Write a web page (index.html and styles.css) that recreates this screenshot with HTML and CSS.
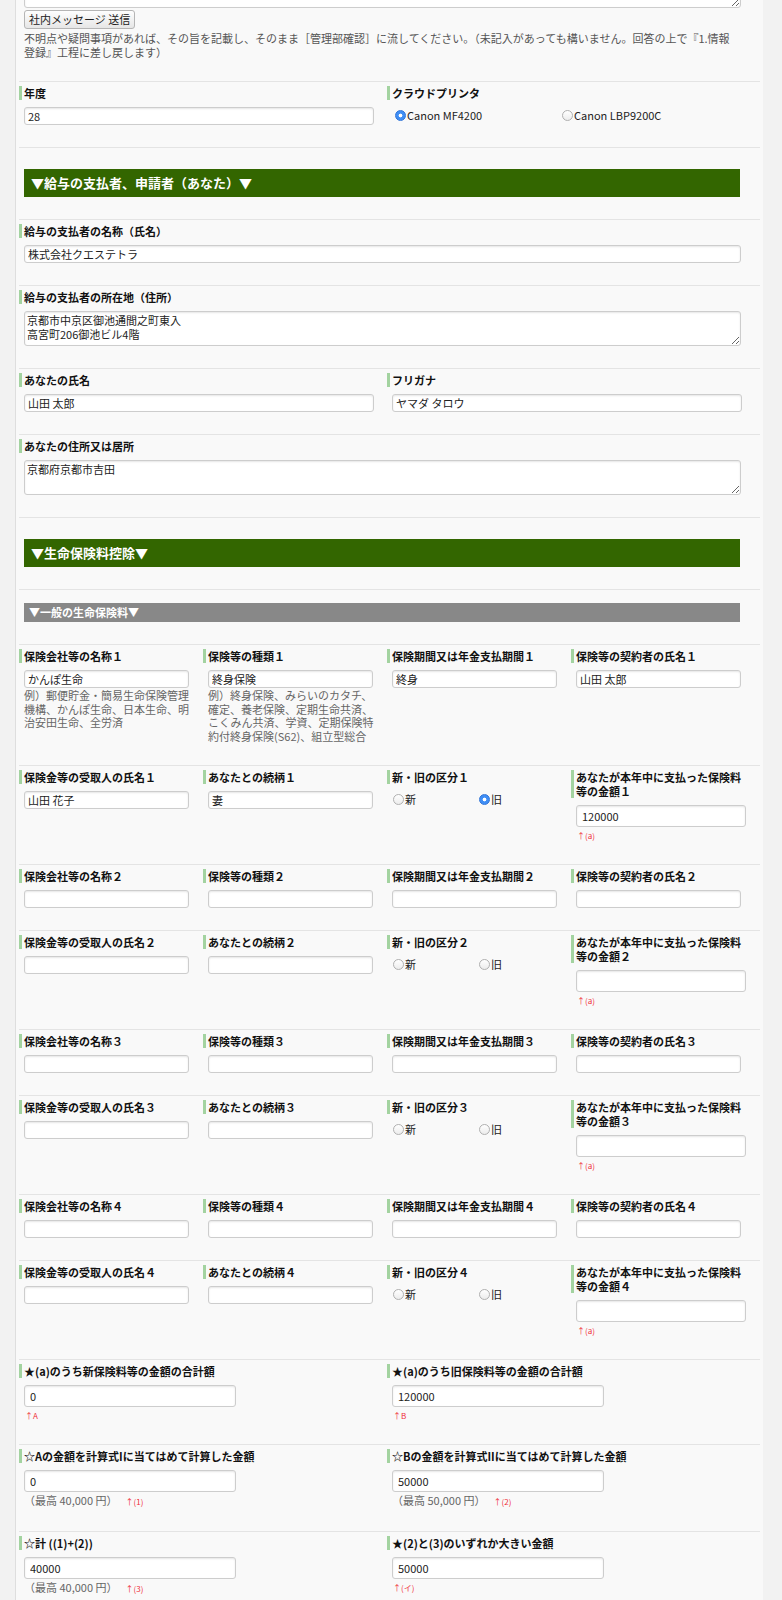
FILE: index.html
```html
<!DOCTYPE html>
<html lang="ja">
<head>
<meta charset="utf-8">
<title>保険料控除申告</title>
<link rel="stylesheet" href="styles.css">
</head>
<body>
<div class="page">
  <div class="row row-top">
    <textarea class="ta ta-top"></textarea>
    <button class="btn" type="button">社内メッセージ 送信</button>
    <p class="note">不明点や疑問事項があれば、その旨を記載し、そのまま［管理部確認］に流してください。（未記入があっても構いません。回答の上で『1.情報<br>登録』工程に差し戻します）</p>
  </div>

  <div class="row cols2">
    <div class="col">
      <div class="lbl">年度</div>
      <input class="inp w350" value="28">
    </div>
    <div class="col">
      <div class="lbl">クラウドプリンタ</div>
      <div class="radios printer">
        <label class="radio"><input type="radio" name="printer" checked>Canon MF4200</label>
        <label class="radio"><input type="radio" name="printer">Canon LBP9200C</label>
      </div>
    </div>
  </div>

  <div class="row row-hdr">
    <div class="hdr-green">▼給与の支払者、申請者（あなた）▼</div>
  </div>

  <div class="row">
    <div class="lbl">給与の支払者の名称（氏名）</div>
    <input class="inp wfull" value="株式会社クエステトラ">
  </div>

  <div class="row">
    <div class="lbl">給与の支払者の所在地（住所）</div>
    <textarea class="ta">京都市中京区御池通間之町東入
高宮町206御池ビル4階</textarea>
  </div>

  <div class="row cols2">
    <div class="col">
      <div class="lbl">あなたの氏名</div>
      <input class="inp w350" value="山田 太郎">
    </div>
    <div class="col">
      <div class="lbl">フリガナ</div>
      <input class="inp w350" value="ヤマダ タロウ">
    </div>
  </div>

  <div class="row">
    <div class="lbl">あなたの住所又は居所</div>
    <textarea class="ta">京都府京都市吉田</textarea>
  </div>

  <div class="row row-hdr">
    <div class="hdr-green">▼生命保険料控除▼</div>
  </div>

  <div class="row row-sub">
    <div class="hdr-gray">▼一般の生命保険料▼</div>
  </div>

  <!-- 1 -->
  <div class="row cols4">
    <div class="col">
      <div class="lbl">保険会社等の名称１</div>
      <input class="inp w165" value="かんぽ生命">
      <div class="help">例）郵便貯金・簡易生命保険管理機構、かんぽ生命、日本生命、明治安田生命、全労済</div>
    </div>
    <div class="col">
      <div class="lbl">保険等の種類１</div>
      <input class="inp w165" value="終身保険">
      <div class="help">例）終身保険、みらいのカタチ、確定、養老保険、定期生命共済、こくみん共済、学資、定期保険特約付終身保険(S62)、組立型総合</div>
    </div>
    <div class="col">
      <div class="lbl">保険期間又は年金支払期間１</div>
      <input class="inp w165" value="終身">
    </div>
    <div class="col">
      <div class="lbl">保険等の契約者の氏名１</div>
      <input class="inp w165" value="山田 太郎">
    </div>
  </div>

  <div class="row cols4">
    <div class="col">
      <div class="lbl">保険金等の受取人の氏名１</div>
      <input class="inp w165" value="山田 花子">
    </div>
    <div class="col">
      <div class="lbl">あなたとの続柄１</div>
      <input class="inp w165" value="妻">
    </div>
    <div class="col">
      <div class="lbl">新・旧の区分１</div>
      <div class="radios kubun">
        <label class="radio"><input type="radio" name="k1">新</label>
        <label class="radio"><input type="radio" name="k1" checked>旧</label>
      </div>
    </div>
    <div class="col">
      <div class="lbl">あなたが本年中に支払った保険料<br>等の金額１</div>
      <input class="inp w170" value="120000">
      <div class="ref">↑(a)</div>
    </div>
  </div>

  <!-- 2 -->
  <div class="row cols4">
    <div class="col">
      <div class="lbl">保険会社等の名称２</div>
      <input class="inp w165">
    </div>
    <div class="col">
      <div class="lbl">保険等の種類２</div>
      <input class="inp w165">
    </div>
    <div class="col">
      <div class="lbl">保険期間又は年金支払期間２</div>
      <input class="inp w165">
    </div>
    <div class="col">
      <div class="lbl">保険等の契約者の氏名２</div>
      <input class="inp w165">
    </div>
  </div>

  <div class="row cols4">
    <div class="col">
      <div class="lbl">保険金等の受取人の氏名２</div>
      <input class="inp w165">
    </div>
    <div class="col">
      <div class="lbl">あなたとの続柄２</div>
      <input class="inp w165">
    </div>
    <div class="col">
      <div class="lbl">新・旧の区分２</div>
      <div class="radios kubun">
        <label class="radio"><input type="radio" name="k2">新</label>
        <label class="radio"><input type="radio" name="k2">旧</label>
      </div>
    </div>
    <div class="col">
      <div class="lbl">あなたが本年中に支払った保険料<br>等の金額２</div>
      <input class="inp w170">
      <div class="ref">↑(a)</div>
    </div>
  </div>

  <!-- 3 -->
  <div class="row cols4">
    <div class="col">
      <div class="lbl">保険会社等の名称３</div>
      <input class="inp w165">
    </div>
    <div class="col">
      <div class="lbl">保険等の種類３</div>
      <input class="inp w165">
    </div>
    <div class="col">
      <div class="lbl">保険期間又は年金支払期間３</div>
      <input class="inp w165">
    </div>
    <div class="col">
      <div class="lbl">保険等の契約者の氏名３</div>
      <input class="inp w165">
    </div>
  </div>

  <div class="row cols4">
    <div class="col">
      <div class="lbl">保険金等の受取人の氏名３</div>
      <input class="inp w165">
    </div>
    <div class="col">
      <div class="lbl">あなたとの続柄３</div>
      <input class="inp w165">
    </div>
    <div class="col">
      <div class="lbl">新・旧の区分３</div>
      <div class="radios kubun">
        <label class="radio"><input type="radio" name="k3">新</label>
        <label class="radio"><input type="radio" name="k3">旧</label>
      </div>
    </div>
    <div class="col">
      <div class="lbl">あなたが本年中に支払った保険料<br>等の金額３</div>
      <input class="inp w170">
      <div class="ref">↑(a)</div>
    </div>
  </div>

  <!-- 4 -->
  <div class="row cols4">
    <div class="col">
      <div class="lbl">保険会社等の名称４</div>
      <input class="inp w165">
    </div>
    <div class="col">
      <div class="lbl">保険等の種類４</div>
      <input class="inp w165">
    </div>
    <div class="col">
      <div class="lbl">保険期間又は年金支払期間４</div>
      <input class="inp w165">
    </div>
    <div class="col">
      <div class="lbl">保険等の契約者の氏名４</div>
      <input class="inp w165">
    </div>
  </div>

  <div class="row cols4">
    <div class="col">
      <div class="lbl">保険金等の受取人の氏名４</div>
      <input class="inp w165">
    </div>
    <div class="col">
      <div class="lbl">あなたとの続柄４</div>
      <input class="inp w165">
    </div>
    <div class="col">
      <div class="lbl">新・旧の区分４</div>
      <div class="radios kubun">
        <label class="radio"><input type="radio" name="k4">新</label>
        <label class="radio"><input type="radio" name="k4">旧</label>
      </div>
    </div>
    <div class="col">
      <div class="lbl">あなたが本年中に支払った保険料<br>等の金額４</div>
      <input class="inp w170">
      <div class="ref">↑(a)</div>
    </div>
  </div>

  <!-- totals -->
  <div class="row cols2">
    <div class="col">
      <div class="lbl">★(a)のうち新保険料等の金額の合計額</div>
      <input class="inp w212" value="0">
      <div class="ref">↑A</div>
    </div>
    <div class="col">
      <div class="lbl">★(a)のうち旧保険料等の金額の合計額</div>
      <input class="inp w212" value="120000">
      <div class="ref">↑B</div>
    </div>
  </div>

  <div class="row cols2">
    <div class="col">
      <div class="lbl">☆Aの金額を計算式Iに当てはめて計算した金額</div>
      <input class="inp w212" value="0">
      <div class="max">（最高 40,000 円）<span class="ref-in">↑(1)</span></div>
    </div>
    <div class="col">
      <div class="lbl">☆Bの金額を計算式IIに当てはめて計算した金額</div>
      <input class="inp w212" value="50000">
      <div class="max">（最高 50,000 円）<span class="ref-in">↑(2)</span></div>
    </div>
  </div>

  <div class="row cols2">
    <div class="col">
      <div class="lbl">☆計 ((1)+(2))</div>
      <input class="inp w212" value="40000">
      <div class="max">（最高 40,000 円）<span class="ref-in">↑(3)</span></div>
    </div>
    <div class="col">
      <div class="lbl">★(2)と(3)のいずれか大きい金額</div>
      <input class="inp w212" value="50000">
      <div class="ref">↑(イ)</div>
    </div>
  </div>
</div>
</body>
</html>
```

FILE: styles.css
```css
html, body {
  margin: 0;
  padding: 0;
}

body {
  background: #f2f2f2;
  font-family: "Noto Sans CJK JP", "Noto Sans", sans-serif;
  font-size: 11px;
  color: #111;
}

.page {
  width: 748px;
  margin: -42px 0 0 15px;
  box-sizing: border-box;
  padding: 0 3px;
  background: #f9f9f9;
  border-left: 1px solid #dedede;
}

.row {
  border-top: 1px solid #e4e4e4;
  padding: 4px 0 22px;
}

.row-top {
  border-top: none;
  padding-top: 0;
}

.row-hdr {
  padding: 21px 0 22px;
}

.row-sub {
  padding: 13px 0 22px;
}

.cols2 {
  display: grid;
  grid-template-columns: 368px 368px;
}

.cols4 {
  display: grid;
  grid-template-columns: repeat(4, 184px);
}

.lbl {
  border-left: 3px solid #a3d3a0;
  padding-left: 2px;
  font-weight: bold;
  line-height: 14px;
  margin-bottom: 7px;
  color: #111;
}

.inp {
  display: block;
  margin: 0 0 0 5px;
  height: 18px;
  box-sizing: border-box;
  border: 1px solid #cdcdcd;
  border-radius: 3px;
  background: #fff;
  font-family: "Noto Sans CJK JP", sans-serif;
  font-size: 11px;
  color: #222;
  padding: 0 3px;
  box-shadow: inset 0 1px 2px rgba(0, 0, 0, 0.1);
  outline: none;
}

.w350 { width: 350px; }
.w165 { width: 165px; }
.w170 { width: 170px; height: 22px; padding-left: 5px; }
.w212 { width: 212px; height: 22px; padding-left: 5px; }
.wfull { width: 717px; }

.ta {
  display: block;
  margin: 0 0 0 5px;
  width: 717px;
  height: 35px;
  box-sizing: border-box;
  border: 1px solid #cdcdcd;
  border-radius: 3px;
  background: #fff;
  font-family: "Noto Sans CJK JP", sans-serif;
  font-size: 11px;
  line-height: 14px;
  color: #222;
  padding: 1px 2px;
  box-shadow: inset 0 1px 2px rgba(0, 0, 0, 0.1);
  resize: both;
  overflow: hidden;
}

.ta-top {
  height: 50px;
}

.btn {
  display: block;
  margin: 2px 0 0 5px;
  height: 19px;
  padding: 0 4px;
  font-family: "Noto Sans CJK JP", sans-serif;
  font-size: 11px;
  line-height: 17px;
  color: #222;
  border: 1px solid #b5b5b5;
  border-radius: 3px;
  background: linear-gradient(#fefefe, #e6e6e6);
}

.note {
  margin: 2px 0 0 5px;
  width: 730px;
  color: #555;
  line-height: 14px;
}

.hdr-green {
  margin-left: 5px;
  width: 716px;
  height: 28px;
  box-sizing: border-box;
  padding-left: 7px;
  background: #336600;
  color: #fff;
  font-weight: bold;
  font-size: 13px;
  line-height: 28px;
}

.hdr-gray {
  margin-left: 5px;
  width: 716px;
  height: 19px;
  box-sizing: border-box;
  padding-left: 5px;
  background: #888888;
  color: #fff;
  font-weight: bold;
  font-size: 11px;
  line-height: 19px;
}

.help {
  width: 167px;
  margin: 1px 0 0 5px;
  color: #666;
  line-height: 13.5px;
}

.radios {
  display: flex;
  line-height: 16px;
}

.printer {
  padding-left: 8px;
}

.printer .radio {
  width: 167px;
}

.kubun {
  padding-left: 6px;
}

.kubun .radio {
  width: 86px;
}

.radio {
  display: flex;
  align-items: center;
  color: #222;
}

.radio input {
  -webkit-appearance: none;
  appearance: none;
  margin: 0 1px 0 0;
  width: 11px;
  height: 11px;
  box-sizing: border-box;
  border-radius: 50%;
  border: 1px solid #b0b0b0;
  background: linear-gradient(#ffffff, #ececec);
}

.radio input:checked {
  border-color: #2f74d8;
  background: radial-gradient(circle, #ffffff 0 1.6px, #3f8ef5 2.2px);
}

.ref {
  margin: 3px 0 0 6px;
  color: #f0303a;
  font-size: 8px;
  line-height: 12px;
}

.max {
  margin: 1px 0 0 5px;
  color: #666;
  line-height: 14px;
}

.ref-in {
  margin-left: 8px;
  color: #f0303a;
  font-size: 8px;
}
```
